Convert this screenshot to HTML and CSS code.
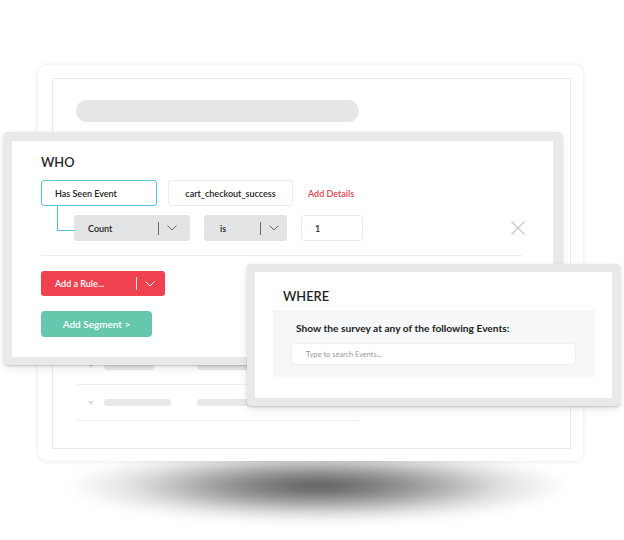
FILE: index.html
```html
<!DOCTYPE html>
<html lang="en">
<head>
<meta charset="utf-8">
<title>Segment builder</title>
<link rel="stylesheet" href="styles.css">
</head>
<body>
<div class="stage">
  <div class="floor-shadow"></div>

  <div class="bg-card">
    <div class="bg-inner">
      <div class="bg-pill"></div>
      <div class="bg-rows">
        <div class="bg-row"><span class="tri"></span><span class="bar bar-a"></span><span class="bar bar-b"></span></div>
        <div class="bg-row"><span class="tri"></span><span class="bar bar-c"></span><span class="bar bar-b"></span></div>
      </div>
    </div>
  </div>

  <div class="win win-who">
    <div class="who-inner">
      <div class="title">WHO</div>
      <div class="rule-row">
        <div class="field field-event">Has Seen Event</div>
        <div class="field field-name">cart_checkout_success</div>
        <a class="add-details">Add Details</a>
      </div>
      <div class="rule-row sub-row">
        <div class="select sel-count">
          <span class="sel-label">Count</span>
          <span class="sel-div"></span>
          <span class="sel-chev"><svg width="10" height="6" viewBox="0 0 10 6"><path d="M0.5 0.5 L5 5 L9.5 0.5" fill="none" stroke="#666" stroke-width="1"/></svg></span>
        </div>
        <div class="select sel-is">
          <span class="sel-label">is</span>
          <span class="sel-div"></span>
          <span class="sel-chev"><svg width="10" height="6" viewBox="0 0 10 6"><path d="M0.5 0.5 L5 5 L9.5 0.5" fill="none" stroke="#666" stroke-width="1"/></svg></span>
        </div>
        <div class="field field-num">1</div>
        <svg class="close" width="14" height="14" viewBox="0 0 14 14"><path d="M0.5 0.5 L13.5 13.5 M13.5 0.5 L0.5 13.5" stroke="#c8c8c8" stroke-width="1.2"/></svg>
      </div>
      <div class="divider"></div>
      <div class="btn-rule">
        <span class="rule-label">Add a Rule...</span>
        <span class="rule-div"></span>
        <span class="sel-chev"><svg width="10" height="6" viewBox="0 0 10 6"><path d="M0.5 0.5 L5 5 L9.5 0.5" fill="none" stroke="#fff" stroke-width="1"/></svg></span>
      </div>
      <div class="btn-segment">Add Segment &gt;</div>
    </div>
  </div>

  <div class="win win-where">
    <div class="where-inner">
      <div class="title title-where">WHERE</div>
      <div class="where-panel">
        <div class="where-label">Show the survey at any of the following Events:</div>
        <div class="search">Type to search Events...</div>
      </div>
    </div>
  </div>
</div>
</body>
</html>
```

FILE: styles.css
```css
* { box-sizing: border-box; }
html, body { margin: 0; padding: 0; background: #fff; }
body { font-family: Lato, "Open Sans", "Liberation Sans", sans-serif; color: #222; }

.stage { position: relative; width: 624px; height: 540px; overflow: hidden; }

/* floor shadow */
.floor-shadow {
  position: absolute; left: 66px; top: 448px; width: 504px; height: 84px;
  background: radial-gradient(ellipse closest-side at 50% 45%, rgba(80,80,80,0.95) 0%, rgba(100,100,100,0.7) 35%, rgba(160,160,160,0.3) 75%, rgba(255,255,255,0) 100%);
  filter: blur(5px);
}

/* background card */
.bg-card {
  position: absolute; left: 38px; top: 65px; width: 545px; height: 396px;
  background: #fff; border-radius: 9px;
  box-shadow: 0 0 5px rgba(0,0,0,0.10);
  padding: 13px 12px 12px 14px;
}
.bg-inner { height: 100%; border: 1px solid #e9eaeb; padding: 21px 0 0 23px; }
.bg-pill { width: 283px; height: 22px; border-radius: 11px; background: #e5e6e7; }
.bg-rows { margin-top: 226px; width: 283px; }
.bg-row { height: 37px; border-bottom: 1px solid #eeeff0; display: flex; align-items: center; padding-left: 12px; }
.bg-row + .bg-row { height: 36px; }
.tri { width: 0; height: 0; border-left: 3px solid transparent; border-right: 3px solid transparent; border-top: 4px solid #dcdcdc; }
.bar { height: 7px; border-radius: 4px; background: #e7e8e9; }
.bar-a { width: 50px; margin-left: 10px; margin-right: 17px; }
.bar-c { width: 67px; margin-left: 10px; }
.bar-b { width: 80px; margin-left: 26px; }

/* windows */
.win {
  position: absolute; background: #e7e9ea; border-radius: 4px; padding: 8px;
  box-shadow: 0 1px 2px rgba(0,0,0,0.18), 0 3px 8px rgba(0,0,0,0.10);
}
.win-who { left: 4px; top: 132px; width: 558px; height: 233px; padding: 9px 9px 8px 8px; }
.win-where { left: 247px; top: 264px; width: 373px; height: 142px; }

.who-inner { background: #fff; height: 100%; padding: 13px 0 0 29px; }
.title { font-size: 12.8px; line-height: 16px; font-weight: 600; color: #1f1f1f; }

.rule-row { display: flex; align-items: center; margin-top: 10px; height: 26px; }
.field {
  height: 26px; border: 1px solid #ebeced; border-radius: 3px; background: #fff;
  font-size: 9px; font-weight: 600; color: #222; display: flex; align-items: center;
}
.field-event { width: 116px; border: 1.5px solid #55c5df; padding-left: 13px; }
.field-name { width: 125px; margin-left: 11px; justify-content: center; }
.add-details { margin-left: 15px; font-size: 9px; font-weight: 600; color: #f0414f; }

.sub-row { position: relative; margin-top: 9px; margin-left: 33px; }
.sub-row::before {
  content: ""; position: absolute; left: -17px; top: -10px; width: 17px; height: 25px;
  border-left: 1.5px solid #55c5df; border-bottom: 1.5px solid #55c5df;
}
.select {
  height: 26px; background: #e3e4e5; border-radius: 3px; display: flex; align-items: center;
  font-size: 9px; font-weight: 600; color: #222;
}
.sel-count { width: 116px; }
.sel-is { width: 83px; margin-left: 14px; }
.sel-label { padding-left: 14px; }
.sel-count .sel-label { width: 84px; }
.sel-is .sel-label { width: 56px; padding-left: 16px; }
.sel-div { width: 1px; height: 13px; background: #6a6a6a; }
.sel-chev { display: flex; padding-left: 8px; }
.field-num { width: 62px; margin-left: 14px; padding-left: 13px; }
.close { margin-left: 148px; }

.divider { width: 481px; height: 1px; background: #eeeff0; margin-top: 14px; }

.btn-rule {
  width: 124px; height: 25px; margin-top: 15px; background: #f0414f; border-radius: 3px;
  display: flex; align-items: center; color: #fff; font-size: 9px; font-weight: 600;
}
.rule-label { width: 95px; padding-left: 14px; }
.rule-div { width: 1px; height: 13px; background: rgba(255,255,255,0.85); }

.btn-segment {
  width: 111px; height: 26px; margin-top: 15px; background: #65c7ab; border-radius: 4px;
  color: #fff; font-size: 10px; font-weight: 600; display: flex; align-items: center; justify-content: center;
}

/* where */
.where-inner { background: #fff; height: 100%; padding: 16px 17px 0 18px; }
.title-where { padding-left: 10px; }
.where-panel { margin-top: 6px; background: #f6f7f8; height: 67px; padding: 11px 19px 0 18px; }
.where-label { padding-left: 5px; font-size: 10.2px; line-height: 14px; font-weight: 700; color: #222; }
.search {
  margin-top: 8px; height: 22px; background: #fff; border-radius: 4px; border: 1px solid #eef0f1;
  font-size: 7.4px; color: #999; display: flex; align-items: center; padding-left: 14px;
}
```
